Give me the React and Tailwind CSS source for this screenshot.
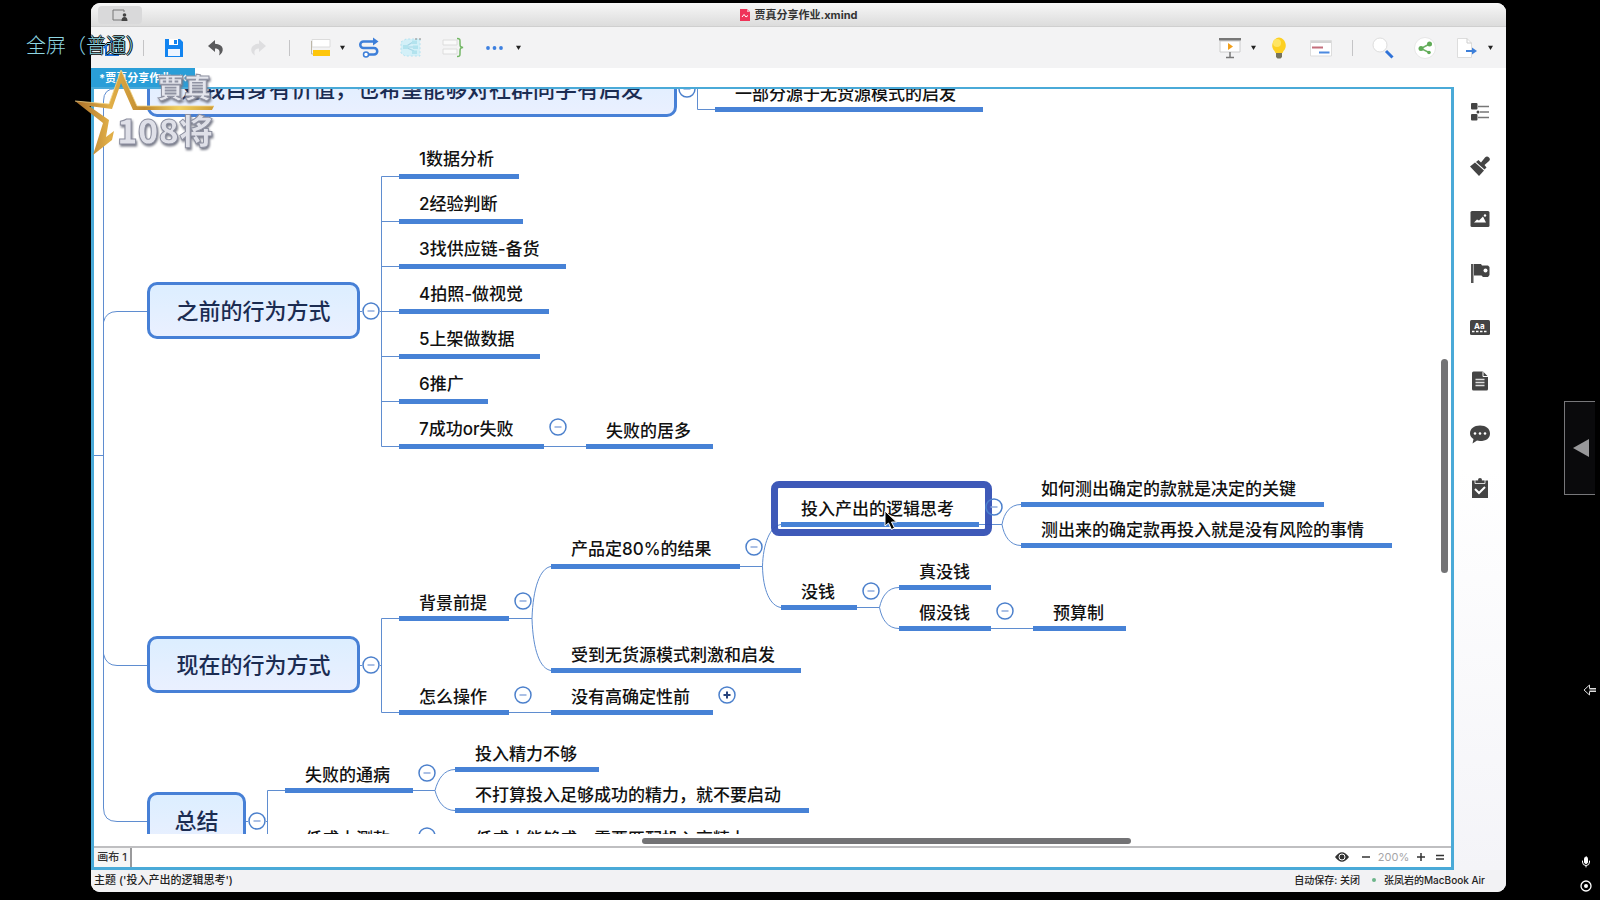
import React, { useState } from 'react';
import { Mic } from 'lucide-react';

// scroll position of the board, every map coordinate below is a board coordinate
const VIEW = { x: 94, y: 89 };

const mainTopics = [
    { id: 'value', text: '对我自身有价值，也希望能够对社群同学有启发', x: 147, y: 60, w: 530 },
    { id: 'before', text: '之前的行为方式', x: 147, y: 282, w: 213 },
    { id: 'now', text: '现在的行为方式', x: 147, y: 636, w: 213 },
    { id: 'summary', text: '总结', x: 147, y: 792, w: 99 },
];

// y is the top of the underline
const topics = [
    { text: '一部分源于无货源模式的启发', x: 715, y: 107, w: 268 },
    { text: '1数据分析', x: 399, y: 174, w: 120, mixed: true },
    { text: '2经验判断', x: 399, y: 219, w: 124, mixed: true },
    { text: '3找供应链-备货', x: 399, y: 264, w: 167, mixed: true },
    { text: '4拍照-做视觉', x: 399, y: 309, w: 150, mixed: true },
    { text: '5上架做数据', x: 399, y: 354, w: 141, mixed: true },
    { text: '6推广', x: 399, y: 399, w: 89, mixed: true },
    { text: '7成功or失败', x: 399, y: 444, w: 145, mixed: true },
    { text: '失败的居多', x: 586, y: 444, w: 127 },
    { text: '投入产出的逻辑思考', x: 781, y: 522, w: 198 },
    { text: '如何测出确定的款就是决定的关键', x: 1021, y: 502, w: 303 },
    { text: '测出来的确定款再投入就是没有风险的事情', x: 1021, y: 543, w: 371 },
    { text: '产品定80%的结果', x: 551, y: 564, w: 189, mixed: true },
    { text: '没钱', x: 781, y: 605, w: 76 },
    { text: '真没钱', x: 899, y: 585, w: 92 },
    { text: '假没钱', x: 899, y: 626, w: 92 },
    { text: '预算制', x: 1033, y: 626, w: 93 },
    { text: '受到无货源模式刺激和启发', x: 551, y: 668, w: 250 },
    { text: '背景前提', x: 399, y: 616, w: 110 },
    { text: '怎么操作', x: 399, y: 710, w: 110 },
    { text: '没有高确定性前', x: 551, y: 710, w: 162 },
    { text: '失败的通病', x: 285, y: 788, w: 128 },
    { text: '投入精力不够', x: 455, y: 767, w: 144 },
    { text: '不打算投入足够成功的精力，就不要启动', x: 455, y: 808, w: 354 },
    { text: '低成本测款', x: 285, y: 852, w: 128 },
    { text: '低成本能够成，需要匹配投入高精力', x: 455, y: 852, w: 320 },
];

const toggles = [
    { x: 687, y: 89 },
    { x: 371, y: 311 },
    { x: 371, y: 665 },
    { x: 257, y: 821 },
    { x: 558, y: 427 },
    { x: 754, y: 547 },
    { x: 994, y: 507 },
    { x: 871, y: 591 },
    { x: 1005, y: 611 },
    { x: 523, y: 601 },
    { x: 523, y: 695 },
    { x: 727, y: 695, closed: true },
    { x: 427, y: 773 },
    { x: 427, y: 836 },
];

const links = [
    'M147 88.5H116Q103.5 88.5 103.5 101V808Q103.5 821.5 117 821.5H147',
    'M103.5 322Q106 311.5 117 311.5H147',
    'M103.5 654Q106 665.5 117 665.5H147',
    'M90 455.5H103.5',
    'M697.5 89V109.5H715',
    'M360 311.5H362M380 311.5H399M399 176.5H381.5V446.5H399',
    'M381.5 221.5H399M381.5 266.5H399M381.5 356.5H399M381.5 401.5H399',
    'M544 446.5H586',
    'M360 665.5H362M380 665.5H381.5M399 618.5H381.5V712.5H399',
    'M509 618.5H532C533 588 540 568 551 566.5M532 618.5C533 650 540 669 551 670.5',
    'M509 712.5H551',
    'M740 566.5H762.5C763 544 770 526 781 524.5M762.5 566.5C763 590 770 606 781 607.5',
    'M979 524.5H1002C1004 513 1010 504.5 1021 504.5M1002 524.5C1004 536 1010 545.5 1021 545.5',
    'M857 607.5H879.5C882 596 888 587.5 899 587.5M879.5 607.5C882 620 888 628.5 899 628.5',
    'M991 628.5H1033',
    'M246 821.5H248M266 821.5H267.5M285 790.5H267.5V860',
    'M413 790.5H435C438 779 444 769.5 455 769.5M435 790.5C438 802 444 810.5 455 810.5',
];

const place = (x, y) => ({ left: x - VIEW.x, top: y - VIEW.y });

const MainTopic = ({ topic }) => (
    <div
        className="absolute h-[57px] flex items-center justify-center rounded-[10px] border-[3px] border-[#4780d6] bg-gradient-to-b from-[#dceeff] to-[#eaf0ff] text-[22px] leading-8 text-[#1b2c52] whitespace-nowrap"
        style={{ ...place(topic.x, topic.y), width: topic.w }}
    >
        {topic.text}
    </div>
);

const Topic = ({ topic }) => (
    <div
        className={`absolute px-5 border-b-[5px] border-[#4782d6] text-[17px] leading-6 text-[#111] whitespace-nowrap ${topic.mixed ? 'pb-[3px]' : 'pb-px'}`}
        style={{ ...place(topic.x, topic.y - (topic.mixed ? 27 : 25)), width: topic.w }}
    >
        {topic.text}
    </div>
);

const Toggle = ({ x, y, closed }) => {
    const [isClosed, setIsClosed] = useState(!!closed);

    return (
        <button
            type="button"
            aria-label={isClosed ? 'Expand' : 'Collapse'}
            onClick={() => setIsClosed(!isClosed)}
            className="absolute size-[18px]"
            style={place(x - 9, y - 9)}
        >
            <svg viewBox="0 0 18 18" className="size-[18px]" fill="none">
                <circle cx="9" cy="9" r="8" stroke="#4c80cc" strokeWidth="1.5" />
                {isClosed ? (
                    <path d="M5.5 9H12.5M9 5.5V12.5" stroke="#26437c" strokeWidth="2" />
                ) : (
                    <path d="M5.5 9H12.5" stroke="#8fabdc" strokeWidth="1.5" />
                )}
            </svg>
        </button>
    );
};

const Tool = ({ label, className, children }) => (
    <button type="button" aria-label={label} className={`flex items-center justify-center shrink-0 ${className}`}>
        <svg viewBox="0 0 22 22" className="size-[22px]" fill="none">
            {children}
        </svg>
    </button>
);

const Caret = ({ className }) => (
    <svg viewBox="0 0 6 6" className={`size-[5px] shrink-0 ${className}`}>
        <path d="M0 1H6L3 6Z" fill="#222" />
    </svg>
);

const Divider = ({ className }) => <div className={`w-px h-4 bg-[#c4c4c6] shrink-0 ${className}`} />;

const Toolbar = () => (
    <div className="h-[41px] shrink-0 flex items-center bg-[#f3f3f4]">
        <Tool label="Home" className="ml-[10px]">
            <path d="M3 11L11 4L19 11M5 10V18H17V10" stroke="#1d6fd8" strokeWidth="2" />
        </Tool>
        <Divider className="ml-5" />
        <Tool label="Save" className="ml-[19px]">
            <path d="M2 2H17L20 5V20H2Z" fill="#1284f0" />
            <path d="M6 2H15V8H6Z" fill="#fff" />
            <path d="M11 3H14V7H11Z" fill="#1284f0" />
            <path d="M5 12H17V19H5Z" fill="#eef5ff" />
        </Tool>
        <Tool label="Undo" className="ml-5">
            <path d="M10 3L3 9L10 15V11.5C14 11.5 15.5 14 14 18.5C20 15 19 7 10 6.8Z" fill="#5a5a5c" />
        </Tool>
        <Tool label="Redo" className="ml-5">
            <path d="M12 3L19 9L12 15V11.5C8 11.5 6.5 14 8 18.5C2 15 3 7 12 6.8Z" fill="#dedee0" />
        </Tool>
        <Divider className="ml-5" />
        <Tool label="Topic" className="ml-[19px]">
            <path d="M3 2.5H21V10H3Z" fill="#fff" stroke="#dcdcdc" />
            <path d="M2.5 4V17H5" stroke="#bdb7a8" />
            <path d="M4 13H21V19H4Z" fill="#fec60b" />
        </Tool>
        <Caret className="ml-[9px]" />
        <Tool label="Relationship" className="ml-[13px]">
            <path d="M17 4.5H5.5A3.2 3.2 0 0 0 5.5 11H16A3.2 3.2 0 0 1 16 17.5H10" stroke="#3d7fd9" strokeWidth="2.5" />
            <path d="M15 0.5L20.5 4.5L15 8.5Z" fill="#3d7fd9" />
            <circle cx="8" cy="17.5" r="2.5" fill="#fff" stroke="#3d7fd9" strokeWidth="1.5" />
        </Tool>
        <Tool label="Boundary" className="ml-5">
            <path d="M1 5L6 2H20V19H5L1 16Z" fill="#d3f0f8" stroke="#b4e2f0" strokeDasharray="2 2" />
            <path d="M5 10L13 5M5 10L14 14M5 10H15" stroke="#a5d6e6" strokeWidth="1.2" />
            <path d="M12 3.5H17V7H12ZM13 8.5H18V12H13ZM12 13.5H17V17H12ZM3 8H8V12H3Z" fill="#b2e3ee" />
            <path d="M15 2H21" stroke="#888" strokeDasharray="2 2" />
        </Tool>
        <Tool label="Summary" className="ml-5">
            <path d="M1 3H15V8H1ZM1 12H15V17H1Z" fill="#fafafa" stroke="#dcdcdc" />
            <path d="M15 1.5C18.5 1.5 18 3 18 6.5S18.5 10 21 10.5C18.5 11 18 11 18 14.5S18.5 19.5 15 19.5" stroke="#74b766" strokeWidth="1.5" />
        </Tool>
        <Tool label="More" className="ml-5">
            <circle cx="4" cy="11" r="1.9" fill="#3d80e0" />
            <circle cx="10.5" cy="11" r="1.9" fill="#3d80e0" />
            <circle cx="17" cy="11" r="1.9" fill="#3d80e0" />
        </Tool>
        <Caret className="ml-[10px]" />

        <Tool label="Present" className="ml-auto">
            <path d="M1 4H21V15H1Z" fill="#fff" stroke="#ccc" />
            <path d="M0 1H22V3.5H0Z" fill="#777" />
            <path d="M9 6L14 9.5L9 13Z" fill="#f2a01c" />
            <path d="M11 15V20M7 20.5H15" stroke="#777" strokeWidth="1.5" />
        </Tool>
        <Caret className="ml-[10px]" />
        <Tool label="Brainstorm" className="ml-3">
            <path d="M11 0.5A8 8 0 0 1 15.5 14L14.5 16H7.5L6.5 14A8 8 0 0 1 11 .5Z" fill="#fdd022" />
            <circle cx="9" cy="6" r="4" fill="#ffe563" />
            <path d="M8 16H14V20L12.5 21.5H9.5L8 20Z" fill="#76735c" />
        </Tool>
        <Tool label="Gantt" className="ml-5">
            <path d="M0.5 3.5H21.5V19H0.5Z" fill="#fff" stroke="#ddd" />
            <path d="M1 5H21" stroke="#aaa" />
            <path d="M2 10.5H13" stroke="#c46f7c" strokeWidth="2" />
            <path d="M9 15.5H19.5" stroke="#4d8ae0" strokeWidth="2" />
        </Tool>
        <Divider className="ml-5" />
        <Tool label="Search" className="ml-[19px]">
            <circle cx="8" cy="8" r="7" fill="#fff" stroke="#ddd" />
            <path d="M14 14L20.5 20.5" stroke="#2f72d8" strokeWidth="3" />
        </Tool>
        <Tool label="Share" className="ml-5">
            <circle cx="11" cy="11" r="10.5" fill="#fff" stroke="#e6e6e6" />
            <path d="M15.5 7L7 11.5L15 15.5" stroke="#6cb263" strokeWidth="1.5" />
            <circle cx="15.5" cy="7" r="2.5" fill="#5fab56" />
            <circle cx="7" cy="11.5" r="2.5" fill="#5fab56" />
            <circle cx="15" cy="15.5" r="1.8" fill="#5fab56" />
        </Tool>
        <Tool label="Export" className="ml-5">
            <path d="M1.5 1.5H11L15.5 6V20.5H1.5Z" fill="#fff" stroke="#ddd" />
            <path d="M11 1.5V6H15.5" stroke="#ccc" />
            <path d="M10 14H18" stroke="#3d7fd9" strokeWidth="2" />
            <path d="M16 10.5L21 14L16 17.5Z" fill="#3d7fd9" />
        </Tool>
        <Caret className="ml-[10px] mr-[13px]" />
    </div>
);

const sidebarItems = [
    {
        label: 'Outline',
        icon: (
            <g>
                <rect x="1" y="1" width="6.5" height="6.5" rx="1" fill="#444" />
                <rect x="1" y="12" width="6.5" height="6.5" rx="1" fill="#444" />
                <circle cx="8" cy="10" r="1.5" fill="#444" />
                <path d="M8 4.5H19M10 10H19M8 15.5H19" stroke="#777" strokeWidth="1.5" />
            </g>
        ),
    },
    {
        label: 'Format',
        icon: (
            <g fill="#444">
                <path d="M0 10.5L5 6.5L14 14.5L9 20Z" />
                <path d="M6 6L8.5 4L11 6.5L15 1.5Q17 -0.5 19 1.5T18.5 5.5L14.5 9L16.5 11.5L14.5 13.5Z" />
            </g>
        ),
    },
    {
        label: 'Image',
        icon: (
            <g>
                <rect x="0.5" y="2" width="19" height="16" rx="1.5" fill="#444" />
                <path d="M4 13.5L7 10.5L9 11.5L13 7.5L16 13.5Z" fill="#fff" />
                <circle cx="15" cy="6.5" r="1.2" fill="#fff" />
            </g>
        ),
    },
    {
        label: 'Marker',
        icon: (
            <g>
                <path d="M1 1H3.5V20H1Z" fill="#555" />
                <path d="M4 1H11L12 2.5H18L19.5 4V12L18 14H13L11.5 12.5H4Z" fill="#444" />
                <circle cx="15.5" cy="7.5" r="2" fill="#fff" />
            </g>
        ),
    },
    {
        label: 'Label',
        icon: (
            <g>
                <rect x="0" y="3" width="20" height="15" rx="1.5" fill="#444" />
                <path d="M2 14.5H18" stroke="#fff" strokeWidth="1.5" strokeDasharray="2.5 1.5" />
                <text x="4" y="11.5" fontSize="8" fontWeight="700" fill="#fff" fontFamily="Inter">Aa</text>
            </g>
        ),
    },
    {
        label: 'Notes',
        icon: (
            <g>
                <path d="M2 2Q2 .5 3.5 .5H13L18 5.5V18Q18 19.5 16.5 19.5H3.5Q2 19.5 2 18Z" fill="#444" />
                <path d="M13 .5V5.5H18" stroke="#fff" fill="none" />
                <path d="M5.5 8.5H14.5M5.5 11.5H14.5M5.5 14.5H14.5" stroke="#ddd" strokeWidth="1.5" />
            </g>
        ),
    },
    {
        label: 'Comments',
        icon: (
            <g>
                <path d="M10 1.5C16 1.5 20 4.5 20 9.5S16 17 10 17L7 16.5L2.5 19.5L3.5 15C1.5 14 0 12 0 9.5C0 4.5 4 1.5 10 1.5Z" fill="#444" />
                <circle cx="5" cy="9.5" r="1.3" fill="#fff" />
                <circle cx="10" cy="9.5" r="1.3" fill="#fff" />
                <circle cx="15" cy="9.5" r="1.3" fill="#fff" />
            </g>
        ),
    },
    {
        label: 'Task',
        icon: (
            <g>
                <path d="M2 2.5H18V20H2Z" fill="#444" />
                <path d="M5 2H15V5.5H5Z" fill="#444" stroke="#fff" strokeWidth="0.8" />
                <circle cx="10" cy="2" r="2" fill="#444" />
                <path d="M5 11L9 15L15 9" stroke="#fff" strokeWidth="2" fill="none" />
            </g>
        ),
    },
];

const Sidebar = () => (
    <aside className="w-[52px] shrink-0 pt-[34px] bg-gradient-to-b from-white from-50% to-[#f4f4f8]">
        <div className="h-[396px] flex flex-col items-center justify-between">
            {sidebarItems.map((item) => (
                <button key={item.label} type="button" aria-label={item.label} className="size-5">
                    <svg viewBox="0 0 20 20" className="size-5 overflow-visible">{item.icon}</svg>
                </button>
            ))}
        </div>
    </aside>
);

const MindMap = () => (
    <div className="relative flex-1 min-h-0 overflow-hidden">
        <svg className="absolute inset-0 w-full h-full" fill="none" stroke="#5f8dd0">
            <g transform={`translate(${-VIEW.x} ${-VIEW.y})`}>
                {links.map((d) => (
                    <path key={d} d={d} />
                ))}
            </g>
        </svg>
        {mainTopics.map((topic) => (
            <MainTopic key={topic.id} topic={topic} />
        ))}
        {topics.map((topic) => (
            <Topic key={topic.text} topic={topic} />
        ))}
        {/* selection frame */}
        <div
            className="absolute w-[221px] h-[55px] rounded-lg border-[7px] border-[#3450b4]/95"
            style={place(771, 481)}
        />
        {toggles.map((toggle) => (
            <Toggle key={`${toggle.x}-${toggle.y}`} {...toggle} />
        ))}
        <svg viewBox="0 0 14 21" className="absolute w-[14px] h-[21px]" style={place(884, 510)}>
            <path d="M1 1V16L4.5 13L7.5 19.5L10.5 18L7.5 12H12.5Z" fill="#000" stroke="#fff" />
        </svg>
    </div>
);

const SheetBar = () => (
    <div className="h-[21px] shrink-0 flex items-stretch border-t-2 border-[#bfbfc1] bg-white text-[#333]">
        <button type="button" className="w-[38px] shrink-0 pb-0.5 bg-[#f6f6f6] border-r-2 border-[#9a9a9c] text-[11px] leading-4 whitespace-nowrap">
            画布 1
        </button>
        <div className="ml-auto mr-[6px] pb-0.5 flex items-center">
            <button type="button" aria-label="Show all">
                <svg viewBox="0 0 14 10" className="w-[14px] h-[10px]">
                    <path d="M0 5Q7 -4.5 14 5Q7 14.5 0 5Z" fill="#333" />
                    <circle cx="7" cy="5" r="3" fill="#333" stroke="#fff" />
                </svg>
            </button>
            <button type="button" aria-label="Zoom out" className="ml-3">
                <svg viewBox="0 0 10 10" className="size-[10px]">
                    <path d="M1 5H9" stroke="#333" strokeWidth="1.5" />
                </svg>
            </button>
            <span className="w-[45px] text-center text-[11px] leading-4 font-normal text-[#a5a5a7]">200%</span>
            <button type="button" aria-label="Zoom in">
                <svg viewBox="0 0 10 10" className="size-[10px]">
                    <path d="M1 5H9M5 1V9" stroke="#333" strokeWidth="1.5" />
                </svg>
            </button>
            <button type="button" aria-label="Fit" className="ml-[9px]">
                <svg viewBox="0 0 10 10" className="size-[10px]">
                    <path d="M1 3.5H9M1 7H9" stroke="#333" strokeWidth="1.3" />
                </svg>
            </button>
        </div>
    </div>
);

const Editor = () => (
    <main className="flex-1 min-w-0 flex flex-col">
        <div className="h-[19px] shrink-0 flex bg-white">
            <div className="w-[104px] flex items-center justify-between px-2 bg-[#2a9ed8] text-[11px] leading-4 font-bold text-white whitespace-nowrap">
                <span>*贾真分享作业</span>
                <button type="button" aria-label="Close tab">
                    <svg viewBox="0 0 8 8" className="size-2">
                        <path d="M1 1L7 7M7 1L1 7" stroke="#fff" strokeWidth="1.5" />
                    </svg>
                </button>
            </div>
        </div>
        <div className="relative flex-1 min-h-0 flex flex-col bg-white border-[3px] border-t-2 border-[#4aaad8]">
            <MindMap />
            <div className="h-3 shrink-0 flex items-center pt-px">
                <div className="ml-[548px] w-[489px] h-[6px] rounded-full bg-[#737375]" />
            </div>
            <SheetBar />
            <div className="absolute right-[3px] top-[270px] w-[7px] h-[214px] rounded-full bg-[#737375]" />
        </div>
    </main>
);

// gold star badge in the corner of the stream
const StreamBadge = () => (
    <div className="absolute left-[75px] top-[69px] w-[144px] h-[90px] pointer-events-none">
        <svg viewBox="0 0 144 90" className="absolute inset-0 w-[144px] h-[90px]">
            <defs>
                <linearGradient id="gold" x1="0" y1="0" x2="1" y2="0">
                    <stop offset="0" stopColor="#a86d28" />
                    <stop offset="0.25" stopColor="#e2b048" />
                    <stop offset="0.5" stopColor="#c08a30" />
                    <stop offset="0.75" stopColor="#f0d060" />
                    <stop offset="1" stopColor="#cf9d35" />
                </linearGradient>
            </defs>
            <path
                d="M0 32L34 35L46 1L62 37H139L137 41H58L46 14L37 40L14 37L34 51L31 68L39 62L37 71L18 86L28 54Z"
                fill="url(#gold)"
            />
            <path d="M0 32L34 35L46 1L62 37H139" fill="none" stroke="#f3d68a" strokeWidth="0.8" />
        </svg>
        <span className="absolute left-[82px] top-[4px] text-[27px] leading-8 font-black text-[#e4e5ec] [-webkit-text-stroke:1px_#9093a3] drop-shadow-[1px_2px_1px_#777a88] whitespace-nowrap">
            賈真
        </span>
        <span className="absolute left-[42px] top-[43px] font-['Noto_Sans_CJK_SC',sans-serif] text-[34px] leading-9 font-black text-[#dfe0e8] [-webkit-text-stroke:1px_#8d90a0] drop-shadow-[1px_2px_1px_#777a88] whitespace-nowrap">
            108将
        </span>
    </div>
);

const App = () => {
    return (
        <div className="relative h-screen overflow-hidden bg-black pt-[3px] pb-2 pl-[91px] pr-[94px] font-['Inter','Noto_Sans_CJK_SC',sans-serif] font-medium">
            <div className="h-full flex flex-col overflow-hidden rounded-[9px] bg-white">
                <header className="relative h-6 shrink-0 flex items-center justify-center gap-[5px] border-b border-[#cfcfcf] bg-gradient-to-b from-[#f7f7f7] to-[#dcdcdc] text-[11px] leading-4 font-bold text-[#333]">
                    <button type="button" aria-label="Account" className="absolute left-[7px] top-[3px] w-11 h-[18px] rounded bg-[#d9d9da] flex items-center justify-center">
                        <svg viewBox="0 0 16 12" className="w-4 h-3" fill="none">
                            <path d="M10 11H1V1H12V3" stroke="#777" />
                            <circle cx="12.5" cy="6" r="1.8" fill="#444" />
                            <path d="M9.5 12Q9.5 8 12.5 8T15.5 12Z" fill="#444" />
                        </svg>
                    </button>
                    <svg viewBox="0 0 10 12" className="w-[10px] h-3">
                        <path d="M0 0H7L10 3V12H0Z" fill="#ef3358" />
                        <path d="M7 0V3H10Z" fill="#f9a6b6" />
                        <path d="M2 8L4 5.5L6 8L8 6.5" stroke="#fff" fill="none" />
                    </svg>
                    <h1>贾真分享作业.xmind</h1>
                </header>
                <Toolbar />
                <div className="flex-1 min-h-0 flex">
                    <Editor />
                    <Sidebar />
                </div>
                <footer className="h-[22px] shrink-0 flex items-center pl-[3px] pr-[21px] pb-[2px] bg-[#f2f2f4] text-[#222]">
                    <span className="text-[11px] leading-4">主题 ('投入产出的逻辑思考')</span>
                    <span className="ml-auto text-[10px] leading-4">自动保存: 关闭</span>
                    <span className="ml-3 mr-2 size-1 rounded-full bg-[#6db58a]" />
                    <span className="text-[10px] leading-4">张凤岩的MacBook Air</span>
                </footer>
            </div>

            <StreamBadge />
            <p className="absolute left-[26px] top-8 text-[20px] leading-7 font-light text-[#8ed6e2] [text-shadow:1px_0_#000,-1px_0_#000,0_1px_#000,0_-1px_#000] whitespace-nowrap">
                全屏（普通）
            </p>

            {/* player controls over the right margin */}
            <button type="button" aria-label="Open panel" className="absolute right-[5px] top-[401px] w-[31px] h-[94px] flex items-center justify-end pr-[6px] border border-r-0 border-[#77777a] bg-[#0a0a0c]">
                <svg viewBox="0 0 16 18" className="w-4 h-[18px]">
                    <path d="M0 9L16 0V18Z" fill="#98989a" />
                </svg>
            </button>
            <svg viewBox="0 0 14 12" className="absolute right-[3px] top-[684px] w-[14px] h-3">
                <path d="M1 6L6.5 1V4.5H13M1 6L6.5 11V7.5H13M6.5 6H13" fill="none" stroke="#ddd" />
            </svg>
            <div className="absolute right-2 bottom-2 flex flex-col gap-3 text-white">
                <button type="button" aria-label="Microphone">
                    <Mic className="size-3 [&>rect]:fill-white" strokeWidth={2} />
                </button>
                <button type="button" aria-label="Record">
                    <svg viewBox="0 0 12 12" className="size-3" fill="none">
                        <circle cx="6" cy="6" r="5" stroke="#fff" strokeWidth="1.3" />
                        <circle cx="6" cy="6" r="2" fill="#fff" />
                    </svg>
                </button>
            </div>
        </div>
    );
};

export default App;
